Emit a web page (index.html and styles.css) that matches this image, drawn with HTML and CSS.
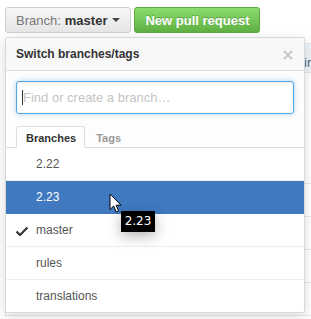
FILE: index.html
```html
<!DOCTYPE html>
<html lang="en">

<head>
    <meta charset="UTF-8">
    <meta name="viewport" content="width=device-width, initial-scale=1.0">
    <title>Switch branches</title>
    <link rel="stylesheet" href="styles.css">
</head>

<body>
    <div class="page">
        <div class="toolbar">
            <button class="btn branch-btn">
                <span class="btn-label">Branch:</span>
                <strong>master</strong>
                <span class="caret"></span>
            </button>
            <button class="btn btn-primary">New pull request</button>
        </div>

        <!-- file list behind the menu -->
        <div class="file-table">
            <div class="tease"><span class="tease-text">ir</span></div>
            <div class="file-row file-row-first"></div>
            <div class="file-row"></div>
            <div class="file-row"></div>
            <div class="file-row"></div>
            <div class="file-row"></div>
        </div>

        <div class="select-menu">
            <div class="menu-header">
                <span class="menu-title">Switch branches/tags</span>
                <svg class="menu-close" width="10" height="10" viewBox="0 0 10 10">
                    <path d="M1 1L9 9M9 1L1 9" stroke="#c8c8c8" stroke-width="2" fill="none"/>
                </svg>
            </div>

            <div class="menu-filters">
                <div class="filter-box">
                    <input type="text" class="filter-input" placeholder="Find or create a branch…">
                </div>
                <div class="menu-tabs">
                    <span class="menu-tab selected">Branches</span>
                    <span class="menu-tab">Tags</span>
                </div>
            </div>

            <div class="menu-list">
                <div class="menu-item">2.22</div>
                <div class="menu-item navigation-focus">2.23</div>
                <div class="menu-item">
                    <svg class="check" width="12" height="10" viewBox="0 0 12 10">
                        <path d="M0.5 5.5L4 9L11.5 1.5" stroke="#333" stroke-width="2.2" fill="none"/>
                    </svg>
                    master
                </div>
                <div class="menu-item">rules</div>
                <div class="menu-item last">translations</div>
            </div>
        </div>

        <div class="tooltip">2.23</div>

        <svg class="pointer" width="14" height="21" viewBox="0 0 14 21">
            <path d="M1 1L1 16.5L4.6 13L7.2 19L9.6 18L7.1 12.2L12 12.2Z" fill="#fff" stroke="#000" stroke-width="1" stroke-linejoin="round"/>
        </svg>
    </div>
</body>
</html>
```

FILE: styles.css
```css
:root {
    --blue: #4079c0;
    --green-top: #8add6d;
    --green-bottom: #60b044;
    --border: #ddd;
    --row-border: #eee;
    --text: #333;
    --muted: #777;
}

* {
    box-sizing: border-box;
    margin: 0;
    padding: 0;
}

body {
    font-family: "Liberation Sans", Arial, Helvetica, sans-serif;
    background-color: white;
    color: var(--text);
    width: 311px;
    height: 319px;
    overflow: hidden;
}

.page {
    position: relative;
    height: 100%;
}

.toolbar {
    display: flex;
    gap: 3px;
    padding: 7px 0 0 5px;
}

.btn {
    display: inline-flex;
    align-items: center;
    height: 26px;
    padding: 0 10px;
    font-family: inherit;
    font-size: 13px;
    border-radius: 3px;
    cursor: pointer;
}

.branch-btn {
    gap: 4px;
    color: var(--text);
    background: linear-gradient(#f6f6f6, #e6e6e6);
    border: 1px solid #cfcfcf;
}

.btn-label {
    color: var(--muted);
}

.caret {
    width: 0;
    height: 0;
    margin-left: 1px;
    border-top: 4px solid #444;
    border-left: 4px solid transparent;
    border-right: 4px solid transparent;
}

.btn-primary {
    color: white;
    font-weight: bold;
    text-shadow: 0 -1px 0 rgba(0, 0, 0, 0.25);
    background: linear-gradient(var(--green-top), var(--green-bottom));
    border: 1px solid #5ca941;
}

/* background file table */
.file-table {
    margin: 10px 0 0 5px;
    width: 320px;
    border: 1px solid #e3e3e3;
    border-bottom: none;
}

.tease {
    height: 29px;
    background-color: #eef4f8;
    border-bottom: 1px solid #dde6ec;
    font-size: 13px;
    line-height: 38px;
    color: #536a7b;
}

.tease-text {
    padding-left: 298px;
}

.file-row {
    height: 33px;
    border-bottom: 1px solid #e8e8e8;
}

.file-row-first {
    height: 111px;
}

/* menu */
.select-menu {
    position: absolute;
    top: 37px;
    left: 5px;
    width: 300px;
    background-color: white;
    border: 1px solid rgba(0, 0, 0, 0.15);
    border-radius: 3px;
    box-shadow: 0 3px 12px rgba(0, 0, 0, 0.15);
    overflow: hidden;
}

.menu-header {
    display: flex;
    justify-content: space-between;
    align-items: center;
    height: 33px;
    padding: 0 11px 0 10px;
    background-color: #f8f8f8;
    border-bottom: 1px solid var(--border);
}

.menu-title {
    font-size: 12px;
    font-weight: bold;
    color: var(--text);
}

.menu-close {
    margin-top: 2px;
}

.menu-filters {
    padding: 10px 10px 0;
    background-color: #fdfdfd;
}

.filter-box {
    position: relative;
}

.filter-box::after {
    content: "";
    position: absolute;
    left: 6px;
    top: 9px;
    width: 1px;
    height: 15px;
    background-color: #333;
}

.filter-input {
    display: block;
    width: 100%;
    height: 33px;
    padding: 0 6px;
    font-family: inherit;
    font-size: 13px;
    border: 1px solid #51a7e8;
    border-radius: 3px;
    outline: none;
    box-shadow: inset 0 1px 2px rgba(0, 0, 0, 0.075), 0 0 5px rgba(81, 167, 232, 0.5);
}

.filter-input::placeholder {
    color: #c4c4c4;
}

.menu-tabs {
    display: flex;
    gap: 1px;
    margin-top: 12px;
    margin-left: -10px;
    margin-right: -10px;
    padding-left: 10px;
    border-bottom: 1px solid var(--border);
}

.menu-tab {
    height: 22px;
    margin-bottom: -1px;
    padding: 0 8px 0 9px;
    font-size: 11px;
    font-weight: bold;
    line-height: 22px;
    color: #999;
    border: 1px solid transparent;
    border-radius: 3px 3px 0 0;
}

.menu-tab.selected {
    color: var(--text);
    background-color: white;
    border-color: var(--border);
    border-bottom-color: white;
}

.menu-list {
    background-color: white;
}

.menu-item {
    position: relative;
    height: 33px;
    padding-left: 30px;
    font-size: 12px;
    line-height: 32px;
    color: #555;
    border-bottom: 1px solid var(--row-border);
}

.menu-item.last {
    border-bottom: none;
    height: 32px;
}

.menu-item.navigation-focus {
    color: white;
    background-color: var(--blue);
    border-bottom-color: var(--blue);
}

.check {
    position: absolute;
    left: 10px;
    top: 12px;
}

.tooltip {
    position: absolute;
    top: 211px;
    left: 121px;
    width: 34px;
    height: 21px;
    font-family: "DejaVu Sans", sans-serif;
    font-size: 12px;
    line-height: 21px;
    text-align: center;
    color: white;
    background-color: black;
    box-shadow: 0 4px 14px rgba(0, 0, 0, 0.3);
}

.pointer {
    position: absolute;
    top: 193px;
    left: 109px;
}
```
